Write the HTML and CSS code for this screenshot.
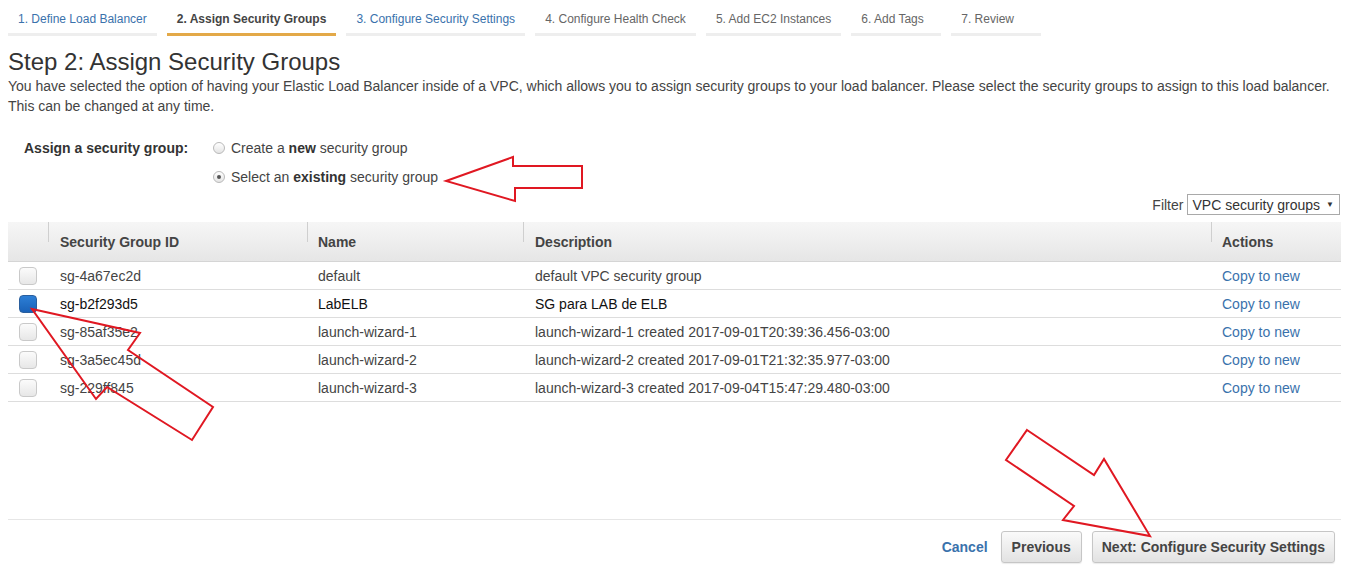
FILE: index.html
```html
<!DOCTYPE html>
<html>
<head>
<meta charset="utf-8">
<link rel="stylesheet" href="styles.css">
</head>
<body>
<div class="page">
  <nav class="tabs">
    <div class="tab link">1. Define Load Balancer</div>
    <div class="tab active">2. Assign Security Groups</div>
    <div class="tab link">3. Configure Security Settings</div>
    <div class="tab">4. Configure Health Check</div>
    <div class="tab">5. Add EC2 Instances</div>
    <div class="tab">6. Add Tags</div>
    <div class="tab">7. Review</div>
  </nav>

  <h1 class="title">Step 2: Assign Security Groups</h1>
  <p class="desc">You have selected the option of having your Elastic Load Balancer inside of a VPC, which allows you to assign security groups to your load balancer. Please select the security groups to assign to this load balancer. This can be changed at any time.</p>

  <div class="assign">
    <div class="assign-label">Assign a security group:</div>
    <div class="radios">
      <div class="radio-row"><span class="radio"></span><span>Create a <b>new</b> security group</span></div>
      <div class="radio-row"><span class="radio checked"></span><span>Select an <b>existing</b> security group</span></div>
    </div>
  </div>

  <div class="filter">
    <span>Filter</span>
    <div class="select"><span>VPC security groups</span><span class="caret">&#9660;</span></div>
  </div>

  <div class="table">
    <div class="row head">
      <div class="c c0"></div>
      <div class="c c1 sep">Security Group ID</div>
      <div class="c c2 sep">Name</div>
      <div class="c c3 sep">Description</div>
      <div class="c c4 sep">Actions</div>
    </div>
    <div class="row">
      <div class="c c0"><span class="cb"></span></div>
      <div class="c c1">sg-4a67ec2d</div>
      <div class="c c2">default</div>
      <div class="c c3">default VPC security group</div>
      <div class="c c4"><span class="lnk">Copy to new</span></div>
    </div>
    <div class="row sel">
      <div class="c c0"><span class="cb on"></span></div>
      <div class="c c1">sg-b2f293d5</div>
      <div class="c c2">LabELB</div>
      <div class="c c3">SG para LAB de ELB</div>
      <div class="c c4"><span class="lnk">Copy to new</span></div>
    </div>
    <div class="row">
      <div class="c c0"><span class="cb"></span></div>
      <div class="c c1">sg-85af35e2</div>
      <div class="c c2">launch-wizard-1</div>
      <div class="c c3">launch-wizard-1 created 2017-09-01T20:39:36.456-03:00</div>
      <div class="c c4"><span class="lnk">Copy to new</span></div>
    </div>
    <div class="row">
      <div class="c c0"><span class="cb"></span></div>
      <div class="c c1">sg-3a5ec45d</div>
      <div class="c c2">launch-wizard-2</div>
      <div class="c c3">launch-wizard-2 created 2017-09-01T21:32:35.977-03:00</div>
      <div class="c c4"><span class="lnk">Copy to new</span></div>
    </div>
    <div class="row">
      <div class="c c0"><span class="cb"></span></div>
      <div class="c c1">sg-229ff845</div>
      <div class="c c2">launch-wizard-3</div>
      <div class="c c3">launch-wizard-3 created 2017-09-04T15:47:29.480-03:00</div>
      <div class="c c4"><span class="lnk">Copy to new</span></div>
    </div>
  </div>

  <div class="footer">
    <span class="cancel">Cancel</span>
    <span class="btn">Previous</span>
    <span class="btn btn-next">Next: Configure Security Settings</span>
  </div>
</div>

<svg class="arrows" width="1350" height="572" viewBox="0 0 1350 572">
  <polygon points="446,181 513,157 513,166 582,166 582,188 515,188 515,201"/>
  <polygon points="32,309 140,333 128,350 213,407 192,440 107,387 96,399"/>
  <polygon points="1027,430 1094,475 1104,459 1150,536 1063,520 1074,506 1006,460"/>
</svg>
</body>
</html>
```

FILE: styles.css
```css
html, body {
  margin: 0;
  padding: 0;
  background: #fff;
  font-family: "Liberation Sans", Arial, sans-serif;
  color: #444;
}
body {
  position: relative;
  width: 1350px;
  height: 572px;
  overflow: hidden;
}
.page {
  padding: 0 9px 0 8px;
}
.tabs {
  display: flex;
  gap: 10px;
}
.tab {
  box-sizing: border-box;
  min-width: 90px;
  font-size: 12px;
  line-height: 14px;
  padding: 12px 10px 7px;
  border-bottom: 3px solid #eeeeee;
  color: #666;
  white-space: nowrap;
}
.tab.link { color: #3a72ac; }
.tab.active {
  color: #444;
  font-weight: bold;
  border-bottom-color: #e3a948;
}

.title {
  margin: 12px 0 0;
  font-size: 24px;
  line-height: 28px;
  font-weight: normal;
  color: #333;
}
.desc {
  margin: 0;
  font-size: 14px;
  line-height: 20px;
  color: #444;
}
.assign {
  display: flex;
  margin-top: 22px;
  font-size: 14px;
  line-height: 20px;
}
.assign-label {
  width: 205px;
  padding-left: 16px;
  box-sizing: border-box;
  font-weight: bold;
  color: #333;
}
.radios {
  display: flex;
  flex-direction: column;
  gap: 9px;
}
.radio-row {
  display: flex;
  align-items: center;
  gap: 6px;
  color: #444;
}
.radio-row b { color: #333; }
.radio {
  width: 10px;
  height: 10px;
  border: 1px solid #b9b9b9;
  border-radius: 50%;
  background: linear-gradient(#ffffff, #e4e4e4);
  position: relative;
}
.radio.checked::after {
  content: "";
  position: absolute;
  left: 3px;
  top: 3px;
  width: 4px;
  height: 4px;
  border-radius: 50%;
  background: #555;
}
.filter {
  display: flex;
  justify-content: flex-end;
  align-items: center;
  gap: 4px;
  margin-top: 7px;
  font-size: 14px;
  color: #444;
}
.select {
  display: flex;
  align-items: center;
  gap: 6px;
  height: 19px;
  border: 1px solid #a9a9a9;
  padding: 0 5px 0 4px;
  margin-right: 1px;
  color: #333;
  font-size: 14px;
}
.caret {
  font-size: 8px;
  color: #333;
}
.table {
  margin-top: 7px;
  font-size: 14px;
}
.row {
  display: flex;
  height: 27px;
  align-items: center;
  border-bottom: 1px solid #dddddd;
  color: #444;
}
.row.sel { color: #111; }
.row.head {
  height: 39px;
  background: linear-gradient(#f6f6f6, #e6e6e6);
  border-bottom: 1px solid #d5d5d5;
  font-weight: bold;
  color: #444;
}
.c {
  box-sizing: border-box;
  padding-left: 12px;
  white-space: nowrap;
  position: relative;
}
.c0 { width: 40px; padding-left: 11px; display: flex; align-items: center; }
.c1 { width: 259px; }
.c2 { width: 216px; padding-left: 11px; }
.c3 { width: 688px; }
.c4 { flex: 1; padding-left: 11px; }
.head .sep::before {
  content: "";
  position: absolute;
  left: 0;
  top: -10px;
  width: 1px;
  height: 20px;
  background: #cfcfcf;
}
.head .c { line-height: 20px; }
.cb {
  width: 16px;
  height: 16px;
  border: 1px solid #c9c9c9;
  border-radius: 4px;
  background: linear-gradient(#fbfbfb, #e7e7e7);
}
.cb.on {
  border-color: #2a5f9e;
  background: linear-gradient(#2d7fd6, #1a62b8);
}
.lnk { color: #3a72ac; }
.footer {
  margin-top: 117px;
  border-top: 1px solid #e6e6e6;
  padding-top: 11px;
  display: flex;
  justify-content: flex-end;
  align-items: center;
  padding-right: 6px;
  font-size: 14px;
  font-weight: bold;
}
.cancel {
  color: #3a72ac;
  margin-right: 13px;
}
.btn {
  display: flex;
  align-items: center;
  height: 30px;
  padding: 0 10px;
  border: 1px solid #c6c6c6;
  border-radius: 3px;
  background: linear-gradient(#fafafa, #e2e2e2);
  color: #444;
  margin-left: 10px;
  box-shadow: 0 1px 1px rgba(0,0,0,0.08);
}
.btn.btn-next { padding: 0 9px; }
.cancel + .btn { margin-left: 0; }
.arrows {
  position: absolute;
  left: 0;
  top: 0;
  pointer-events: none;
}
.arrows polygon {
  fill: none;
  stroke: #e01822;
  stroke-width: 2;
  stroke-linejoin: miter;
}
```
